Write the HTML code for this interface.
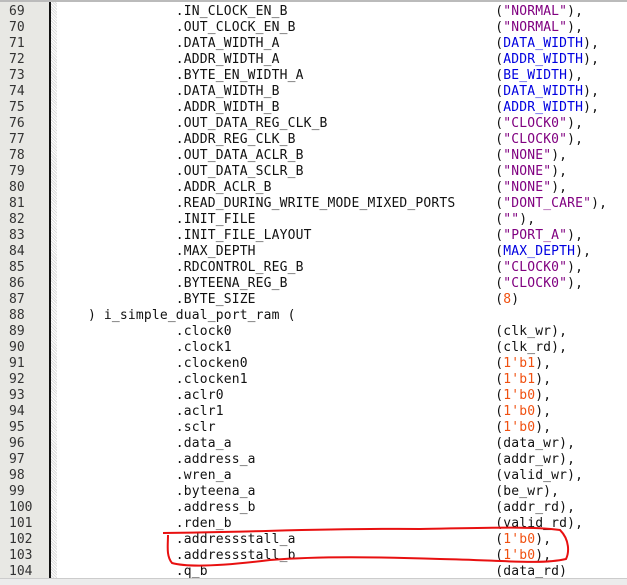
<!DOCTYPE html>
<html><head><style>
html,body{margin:0;padding:0;width:627px;height:584px;overflow:hidden;background:#fff}
.g{position:absolute;left:0;top:0;width:49px;height:584px;background:#e8e8e4}
.bl{position:absolute;left:49px;top:0;width:2px;height:584px;background:#111}
.dt{position:absolute;left:51px;top:0;width:6px;height:584px;background:repeating-linear-gradient(45deg,#ddd 0 1px,#fff 1px 2px)}
.top{position:absolute;left:0;top:0;width:627px;height:2px;background:#bbb}
.bot{position:absolute;left:0;top:578px;width:627px;height:6px;background:#ececec;border-top:1px solid #ccc}
pre{position:absolute;margin:0;top:4px;font:13px/16px "DejaVu Sans Mono","Liberation Mono",monospace;color:#111}
.ln{left:9px;color:#333}
.cd{left:56px;letter-spacing:0.16px}
.s{color:#800080}.c{color:#0000e0}.n{color:#f05010}
</style></head><body>
<div class="g"></div><div class="bl"></div><div class="dt"></div><div class="top"></div>
<pre class="ln">69
70
71
72
73
74
75
76
77
78
79
80
81
82
83
84
85
86
87
88
89
90
91
92
93
94
95
96
97
98
99
100
101
102
103
104</pre>
<pre class="cd">               .IN_CLOCK_EN_B                          (<span class="s">"NORMAL"</span>),
               .OUT_CLOCK_EN_B                         (<span class="s">"NORMAL"</span>),
               .DATA_WIDTH_A                           (<span class="c">DATA_WIDTH</span>),
               .ADDR_WIDTH_A                           (<span class="c">ADDR_WIDTH</span>),
               .BYTE_EN_WIDTH_A                        (<span class="c">BE_WIDTH</span>),
               .DATA_WIDTH_B                           (<span class="c">DATA_WIDTH</span>),
               .ADDR_WIDTH_B                           (<span class="c">ADDR_WIDTH</span>),
               .OUT_DATA_REG_CLK_B                     (<span class="s">"CLOCK0"</span>),
               .ADDR_REG_CLK_B                         (<span class="s">"CLOCK0"</span>),
               .OUT_DATA_ACLR_B                        (<span class="s">"NONE"</span>),
               .OUT_DATA_SCLR_B                        (<span class="s">"NONE"</span>),
               .ADDR_ACLR_B                            (<span class="s">"NONE"</span>),
               .READ_DURING_WRITE_MODE_MIXED_PORTS     (<span class="s">"DONT_CARE"</span>),
               .INIT_FILE                              (<span class="s">""</span>),
               .INIT_FILE_LAYOUT                       (<span class="s">"PORT_A"</span>),
               .MAX_DEPTH                              (<span class="c">MAX_DEPTH</span>),
               .RDCONTROL_REG_B                        (<span class="s">"CLOCK0"</span>),
               .BYTEENA_REG_B                          (<span class="s">"CLOCK0"</span>),
               .BYTE_SIZE                              (<span class="n">8</span>)
    ) i_simple_dual_port_ram (
               .clock0                                 (clk_wr),
               .clock1                                 (clk_rd),
               .clocken0                               (<span class="n">1'b1</span>),
               .clocken1                               (<span class="n">1'b1</span>),
               .aclr0                                  (<span class="n">1'b0</span>),
               .aclr1                                  (<span class="n">1'b0</span>),
               .sclr                                   (<span class="n">1'b0</span>),
               .data_a                                 (data_wr),
               .address_a                              (addr_wr),
               .wren_a                                 (valid_wr),
               .byteena_a                              (be_wr),
               .address_b                              (addr_rd),
               .rden_b                                 (valid_rd),
               .addressstall_a                         (<span class="n">1'b0</span>),
               .addressstall_b                         (<span class="n">1'b0</span>),
               .q_b                                    (data_rd)</pre>
<div class="bot"></div>
<svg style="position:absolute;left:0;top:0" width="627" height="584"><path d="M163 533 C260 532 330 528 420 529 C480 528 530 526 560 530 C570 540 569 553 566 559 C540 565 500 560 440 559 C380 557 320 556 270 560 C230 565 190 568 172 563 C166 556 168 545 168 535" fill="none" stroke="#e81010" stroke-width="2"/></svg>
</body></html>
